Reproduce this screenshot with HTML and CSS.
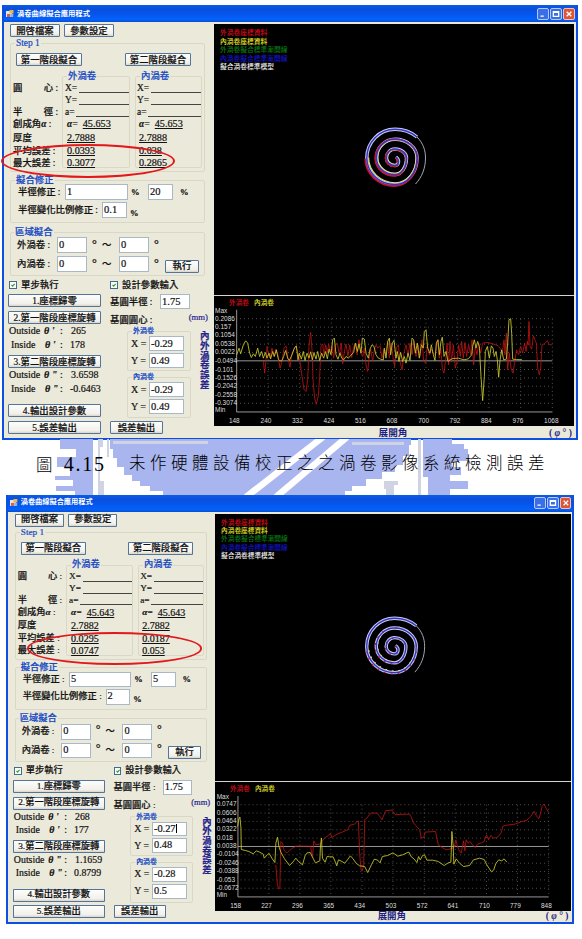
FILE: index.html
```html
<!DOCTYPE html>
<html lang="zh-Hant">
    <head>
        <meta charset="utf-8">
        <meta name="viewport" content="width=device-width, initial-scale=1.0">
        <title>渦卷曲線擬合應用程式</title>
        <link rel="stylesheet" href="styles.css">
    </head>
    <body>

        <!-- shared shapes -->
        <svg class="defs" width="0" height="0">
            <defs>
                <path id="spiral-core" d="M1 -1 C5 2 4 7 0 7.5 A8.5 7.5 0 0 1 -8.5 0 A8.5 9 0 0 1 0 -9 A11.5 9 0 0 1 11.5 0 A11.5 16.5 0 0 1 0 16.5 A18.5 16.5 0 0 1 -18.5 0 A18.5 18.8 0 0 1 0 -18.8 A22 18.8 0 0 1 22 0 A22 26.5 0 0 1 0 26.5 A28.2 26.5 0 0 1 -28.2 0" />
                <path id="spiral" d="M1 -1 C5 2 4 7 0 7.5 A8.5 7.5 0 0 1 -8.5 0 A8.5 9 0 0 1 0 -9 A11.5 9 0 0 1 11.5 0 A11.5 16.5 0 0 1 0 16.5 A18.5 16.5 0 0 1 -18.5 0 A18.5 18.8 0 0 1 0 -18.8 A22 18.8 0 0 1 22 0 A22 26.5 0 0 1 0 26.5 A28.2 26.5 0 0 1 -28.2 0 A28.2 28.7 0 0 1 0 -28.7 C9 -28.7 16 -26 22 -21" />
                <path id="spiral-tail" d="M22 -21 C28 -15 30.5 -8 30.5 0 C30.5 10 27 19 20.5 26" />
                <symbol id="app-icon" viewBox="0 0 8 8">
                    <rect x="0" y="1" width="6" height="6" fill="#dfe6f5" />
                    <rect x="3.5" y="0" width="4" height="3.5" fill="#f0b53c" />
                    <rect x="1" y="4" width="3" height="3" fill="#d9603a" />
                    <rect x="4.3" y="4" width="3" height="3" fill="#8fb0ef" />
                </symbol>
            </defs>
        </svg>

        <div class="window">
            <div class="titlebar">
                <svg class="icon"><use href="#app-icon" /></svg>
                <span class="title">渦卷曲線擬合應用程式</span>
                <div class="controls">
                    <svg class="ctl" viewBox="0 0 12 12"><path d="M3 8.6h4" /></svg>
                    <svg class="ctl" viewBox="0 0 12 12"><path d="M2.8 3.2h6.4v5.6H2.8zM2.8 4h6.4" /></svg>
                    <svg class="ctl close" viewBox="0 0 12 12"><path d="M3.2 3.2l5.6 5.6M8.8 3.2L3.2 8.8" /></svg>
                </div>
            </div>
            <div class="content">
                <div class="panel">
                    <div class="menu">
                        <button>開啓檔案</button>
                        <button>參數設定</button>
                    </div>

                    <fieldset class="step">
                        <legend>Step 1</legend>
                        <div class="stages">
                            <button>第一階段擬合</button>
                            <button>第二階段擬合</button>
                        </div>
                        <div class="results">
                            <div class="rows labels">
                                <span class="wide"><i>圓</i><i>心 :</i></span>
                                <span></span>
                                <span class="wide"><i>半</i><i>徑 :</i></span>
                                <span>創成角<em>α</em> :</span>
                                <span>厚度</span>
                                <span>平均誤差 :</span>
                                <span>最大誤差 :</span>
                            </div>
                            <fieldset>
                                <legend>外渦卷</legend>
                                <div class="rows">
                                    <span>X=<b class="blank"></b></span>
                                    <span>Y=<b class="blank"></b></span>
                                    <span>a=<b class="blank"></b></span>
                                    <span class="angle"><em>α</em>= <u>45.653</u></span>
                                    <span><u>2.7888</u></span>
                                    <span><u>0.0393</u></span>
                                    <span><u>0.3077</u></span>
                                </div>
                            </fieldset>
                            <fieldset>
                                <legend>內渦卷</legend>
                                <div class="rows">
                                    <span>X=<b class="blank"></b></span>
                                    <span>Y=<b class="blank"></b></span>
                                    <span>a=<b class="blank"></b></span>
                                    <span class="angle"><em>α</em>= <u>45.653</u></span>
                                    <span><u>2.7888</u></span>
                                    <span><u>0.038</u></span>
                                    <span><u>0.2865</u></span>
                                </div>
                            </fieldset>
                        </div>
                    </fieldset>

                    <fieldset class="fit">
                        <legend>擬合修正</legend>
                        <div class="line">
                            <span class="lbl-short">半徑修正 :</span>
                            <span class="field w63">1</span>
                            <span class="pct">%</span>
                            <span class="field w25">20</span>
                            <span class="pct">%</span>
                        </div>
                        <div class="line">
                            <span class="lbl-long">半徑變化比例修正 :</span>
                            <span class="field w25">0.1</span>
                            <span class="pct low">%</span>
                        </div>
                    </fieldset>

                    <fieldset class="region">
                        <legend>區域擬合</legend>
                        <div class="line">
                            <span class="lbl">外渦卷 :</span>
                            <span class="field w30">0</span>
                            <span class="deg">°</span><span class="tilde">～</span>
                            <span class="field w30">0</span>
                            <span class="deg">°</span>
                        </div>
                        <div class="line">
                            <span class="lbl">內渦卷 :</span>
                            <span class="field w30">0</span>
                            <span class="deg">°</span><span class="tilde">～</span>
                            <span class="field w30">0</span>
                            <span class="deg">°</span>
                            <button class="run">執行</button>
                        </div>
                    </fieldset>

                    <div class="lower">
                        <div class="steps">
                            <label><svg class="check" viewBox="0 0 8 8"><path d="M2 3.8l1.5 1.7L6.2 2.4" /></svg>單步執行</label>
                            <button class="b1">1.座標歸零</button>
                            <button class="b2">2.第一階段座標旋轉</button>
                            <p class="out"><span>Outside</span><em>θ '</em><span>:</span><span>265</span></p>
                            <p class="in"><span>Inside</span><em>θ '</em><span>:</span><span>178</span></p>
                            <button class="b3">3.第二階段座標旋轉</button>
                            <p class="out"><span>Outside</span><em>θ "</em><span>:</span><span>3.6598</span></p>
                            <p class="in"><span>Inside</span><em>θ "</em><span>:</span><span>-0.6463</span></p>
                            <button class="b4">4.輸出設計參數</button>
                            <button class="b5">5.誤差輸出</button>
                        </div>
                        <div class="design">
                            <label><svg class="check" viewBox="0 0 8 8"><path d="M2 3.8l1.5 1.7L6.2 2.4" /></svg>設計參數輸入</label>
                            <div class="radius"><span>基圓半徑 :</span><span class="field w30">1.75</span></div>
                            <div class="center"><span>基圓圓心 :</span><span class="mm">(mm)</span></div>
                            <div class="offsets">
                                <div class="pairs">
                                    <fieldset>
                                        <legend>外渦卷</legend>
                                        <div class="xy"><span>X =</span><span class="field w35">-0.29</span></div>
                                        <div class="xy"><span>Y =</span><span class="field w35">0.49</span></div>
                                    </fieldset>
                                    <fieldset>
                                        <legend>內渦卷</legend>
                                        <div class="xy"><span>X =</span><span class="field w35">-0.29</span></div>
                                        <div class="xy"><span>Y =</span><span class="field w35">0.49</span></div>
                                    </fieldset>
                                </div>
                                <span class="axis-y">內外渦卷誤差</span>
                            </div>
                            <button class="export">誤差輸出</button>
                        </div>
                    </div>
                </div>

                <div class="view">
                    <div class="plot">
                        <ul class="key">
                            <li class="red">外渦卷座標資料</li>
                            <li class="yellow">內渦卷座標資料</li>
                            <li class="green">外渦卷擬合標準漸開線</li>
                            <li class="blue">內渦卷擬合標準漸開線</li>
                            <li class="white">擬合渦卷標準模型</li>
                        </ul>
                        <svg class="scroll" viewBox="-35 -35 70 70">
                            <use href="#spiral" class="edge" />
                            <use href="#spiral-core" class="edge-red" transform="translate(-.5 .6) scale(1.035)" />
                            <use href="#spiral-core" class="edge-yellow" transform="translate(.4 -.4) scale(.95)" />
                            <use href="#spiral" class="core" />
                            <use href="#spiral-tail" class="tail" />
                        </svg>
                    </div>
                    <svg class="chart" viewBox="12 19 1080 389" preserveAspectRatio="none">
                        <g class="grid">
                            <path d="M90 87H1027M90 112H1027M90 137H1027M90 163H1027M90 188H1027M90 239H1027M90 264H1027M90 289H1027M90 315H1027M90 340H1027" />
                            <path d="M174 87V364M269 87V364M364 87V364M458 87V364M553 87V364M648 87V364M743 87V364M837 87V364M932 87V364M1027 87V364" />
                        </g>
                        <path class="axis" d="M80 60V366H1027M80 213H1027" />
                        <polyline class="s-red" points="160,213 164,250 168,210 171,170 175,190 180,205 186,175 192,200 198,178 204,196 210,235 216,215 222,175 228,168 234,205 240,232 246,190 252,178 258,170 264,190 270,215 276,260 282,298 288,305 293,270 297,170 302,128 306,180 309,270 314,325 319,343 325,318 329,260 333,170 338,162 342,195 347,165 352,188 356,162 361,190 366,168 371,205 376,165 382,160 388,195 394,160 398,222 404,180 408,163 414,200 419,165 425,203 431,170 437,160 441,195 447,150 452,188 458,200 463,175 468,225 473,245 478,200 482,178 488,215 493,180 498,165 504,175 510,168 516,205 522,178 528,195 533,155 538,205 544,160 550,210 554,230 559,175 565,165 570,215 576,240 582,190 588,165 594,195 600,160 606,195 612,155 618,200 624,165 630,200 636,150 641,215 647,220 652,165 658,195 664,178 670,190 676,195 683,150 688,205 692,175 697,235 702,250 708,200 711,160 716,225 720,155 725,215 730,165 736,235 741,215 746,165 751,200 755,155 760,205 765,158 770,200 776,165 782,195 786,150 791,225 796,170 801,195 806,160 812,190 818,160 835,158 850,163 865,168 872,178 877,190 882,150 885,195 889,130 893,240 898,190 903,235 909,250 915,210 920,180 926,195 932,170 938,190 944,160 948,185 952,155 954,165 957,95 960,170 965,178 970,138 974,148 979,160 983,235 988,255 992,235 996,165 1003,162 1012,153 1018,165 1027,165" />
                        <polyline class="s-yellow" points="80,195 87,175 92,192 100,165 107,153 113,160 119,190 124,203 130,192 136,200 143,175 149,200 155,185 160,205 166,188 171,205 177,190 182,207 188,185 193,200 199,180 205,208 211,214 216,212 221,200 227,182 233,205 238,212 246,195 253,175 259,168 264,210 268,190 274,208 280,185 285,212 291,190 297,205 302,186 307,210 312,188 318,208 323,185 329,212 335,190 341,205 347,185 352,207 357,178 363,195 368,150 373,145 378,195 384,208 390,190 395,205 401,210 408,200 415,205 423,196 431,188 436,160 442,185 447,162 453,190 457,145 463,148 468,190 475,205 480,178 486,165 492,170 498,195 505,205 512,208 520,210 523,175 528,205 533,155 538,145 542,195 547,160 552,152 558,205 562,185 567,215 572,188 578,215 583,200 588,220 594,190 600,212 606,145 611,150 616,190 622,160 628,205 634,165 640,175 643,125 648,120 653,175 660,190 664,165 670,195 675,212 679,160 684,150 688,195 693,155 697,142 702,200 708,185 714,215 720,210 728,206 745,205 762,210 775,207 785,195 788,170 793,150 798,175 803,155 808,170 813,260 818,332 823,260 826,185 832,170 838,205 844,168 849,175 853,200 858,185 862,210 866,262 870,212 875,180 881,210 889,208 893,160 897,90 902,87 905,130 908,208 920,209 936,210" />
                        <g class="ticks">
                            <text x="15" y="71">Max</text>
                            <text x="15" y="93">0.2086</text>
                            <text x="15" y="118">0.157</text>
                            <text x="15" y="143">0.1054</text>
                            <text x="15" y="169">0.0538</text>
                            <text x="15" y="194">0.0022</text>
                            <text x="15" y="219">-0.0494</text>
                            <text x="15" y="245">-0.101</text>
                            <text x="15" y="270">-0.1526</text>
                            <text x="15" y="295">-0.2042</text>
                            <text x="15" y="321">-0.2558</text>
                            <text x="15" y="346">-0.3074</text>
                            <text x="15" y="367">Min</text>
                        </g>
                        <g class="ticks x">
                            <text x="73" y="400">148</text>
                            <text x="168" y="400">240</text>
                            <text x="262" y="400">332</text>
                            <text x="357" y="400">424</text>
                            <text x="451" y="400">516</text>
                            <text x="546" y="400">608</text>
                            <text x="641" y="400">700</text>
                            <text x="735" y="400">792</text>
                            <text x="829" y="400">884</text>
                            <text x="924" y="400">976</text>
                            <text x="1024" y="400">1068</text>
                        </g>
                        <text class="name red" x="57" y="46">外渦卷</text>
                        <text class="name yellow" x="132" y="46">內渦卷</text>
                    </svg>
                    <div class="axis-x"><span></span><span>展開角</span><span>( <em>φ</em> ° )</span></div>
                </div>
            </div>
            <div class="mark mark-a"></div>
        </div>

        <div class="caption">
            <svg class="emblem" viewBox="0 0 582 56">
                <g fill="#a9b5ee">
                    <path d="M60 0H93V56H75V52H56V47H73V41H55V37H70V28H57V18H76V10H60z" />
                    <path d="M110 0H411V6H409V17H403V26H395V33H382V40H366V47H352V52H345V56H163V52H150V47H140V42H132V36H124V28H117V19H113V10H110z" />
                    <path d="M423 0H452V5H464V10H468V22H452V28H461V36H450V42H468V50H450V56H428V38H423z" />
                </g>
                <g fill="#cfd3e3">
                    <path d="M98 0h5v8h-3v34h4v14h-6z" />
                    <path d="M107 0h2v18h-2zM418 0h3v56h-3zM384 42h14v4h-4v10h-8v-6h-2z" />
                    <path d="M113 2h95v3h-95zM352 3h52v3h-52z" />
                </g>
                <g class="stripes">
                    <path d="M323 -2L246 58" />
                    <path d="M347 -2L276 58" />
                </g>
            </svg>
            <p><span class="no">圖 <b>4.15</b></span><span class="what">未作硬體設備校正之之渦卷影像系統檢測誤差</span></p>
        </div>

        <div class="window second">
            <div class="titlebar">
                <svg class="icon"><use href="#app-icon" /></svg>
                <span class="title">渦卷曲線擬合應用程式</span>
                <div class="controls">
                    <svg class="ctl" viewBox="0 0 12 12"><path d="M3 8.6h4" /></svg>
                    <svg class="ctl" viewBox="0 0 12 12"><path d="M2.8 3.2h6.4v5.6H2.8zM2.8 4h6.4" /></svg>
                    <svg class="ctl close" viewBox="0 0 12 12"><path d="M3.2 3.2l5.6 5.6M8.8 3.2L3.2 8.8" /></svg>
                </div>
            </div>
            <div class="content">
                <div class="panel">
                    <div class="menu">
                        <button>開啓檔案</button>
                        <button>參數設定</button>
                    </div>

                    <fieldset class="step">
                        <legend>Step 1</legend>
                        <div class="stages">
                            <button>第一階段擬合</button>
                            <button>第二階段擬合</button>
                        </div>
                        <div class="results">
                            <div class="rows labels">
                                <span class="wide"><i>圓</i><i>心 :</i></span>
                                <span></span>
                                <span class="wide"><i>半</i><i>徑 :</i></span>
                                <span>創成角<em>α</em> :</span>
                                <span>厚度</span>
                                <span>平均誤差 :</span>
                                <span>最大誤差 :</span>
                            </div>
                            <fieldset>
                                <legend>外渦卷</legend>
                                <div class="rows">
                                    <span>X=<b class="blank"></b></span>
                                    <span>Y=<b class="blank"></b></span>
                                    <span>a=<b class="blank"></b></span>
                                    <span class="angle"><em>α</em>= <u>45.643</u></span>
                                    <span><u>2.7882</u></span>
                                    <span><u>0.0295</u></span>
                                    <span><u>0.0747</u></span>
                                </div>
                            </fieldset>
                            <fieldset>
                                <legend>內渦卷</legend>
                                <div class="rows">
                                    <span>X=<b class="blank"></b></span>
                                    <span>Y=<b class="blank"></b></span>
                                    <span>a=<b class="blank"></b></span>
                                    <span class="angle"><em>α</em>= <u>45.643</u></span>
                                    <span><u>2.7882</u></span>
                                    <span><u>0.0187</u></span>
                                    <span><u>0.053</u></span>
                                </div>
                            </fieldset>
                        </div>
                    </fieldset>

                    <fieldset class="fit">
                        <legend>擬合修正</legend>
                        <div class="line">
                            <span class="lbl-short">半徑修正 :</span>
                            <span class="field w63">5</span>
                            <span class="pct">%</span>
                            <span class="field w25">5</span>
                            <span class="pct">%</span>
                        </div>
                        <div class="line">
                            <span class="lbl-long">半徑變化比例修正 :</span>
                            <span class="field w25">2</span>
                            <span class="pct low">%</span>
                        </div>
                    </fieldset>

                    <fieldset class="region">
                        <legend>區域擬合</legend>
                        <div class="line">
                            <span class="lbl">外渦卷 :</span>
                            <span class="field w30">0</span>
                            <span class="deg">°</span><span class="tilde">～</span>
                            <span class="field w30">0</span>
                            <span class="deg">°</span>
                        </div>
                        <div class="line">
                            <span class="lbl">內渦卷 :</span>
                            <span class="field w30">0</span>
                            <span class="deg">°</span><span class="tilde">～</span>
                            <span class="field w30">0</span>
                            <span class="deg">°</span>
                            <button class="run">執行</button>
                        </div>
                    </fieldset>

                    <div class="lower">
                        <div class="steps">
                            <label><svg class="check" viewBox="0 0 8 8"><path d="M2 3.8l1.5 1.7L6.2 2.4" /></svg>單步執行</label>
                            <button class="b1">1.座標歸零</button>
                            <button class="b2">2.第一階段座標旋轉</button>
                            <p class="out"><span>Outside</span><em>θ '</em><span>:</span><span>268</span></p>
                            <p class="in"><span>Inside</span><em>θ '</em><span>:</span><span>177</span></p>
                            <button class="b3">3.第二階段座標旋轉</button>
                            <p class="out"><span>Outside</span><em>θ "</em><span>:</span><span>1.1659</span></p>
                            <p class="in"><span>Inside</span><em>θ "</em><span>:</span><span>0.8799</span></p>
                            <button class="b4">4.輸出設計參數</button>
                            <button class="b5">5.誤差輸出</button>
                        </div>
                        <div class="design">
                            <label><svg class="check" viewBox="0 0 8 8"><path d="M2 3.8l1.5 1.7L6.2 2.4" /></svg>設計參數輸入</label>
                            <div class="radius"><span>基圓半徑 :</span><span class="field w30">1.75</span></div>
                            <div class="center"><span>基圓圓心 :</span><span class="mm">(mm)</span></div>
                            <div class="offsets">
                                <div class="pairs">
                                    <fieldset>
                                        <legend>外渦卷</legend>
                                        <div class="xy"><span>X =</span><span class="field w35 caret">-0.27</span></div>
                                        <div class="xy"><span>Y =</span><span class="field w35">0.48</span></div>
                                    </fieldset>
                                    <fieldset>
                                        <legend>內渦卷</legend>
                                        <div class="xy"><span>X =</span><span class="field w35">-0.28</span></div>
                                        <div class="xy"><span>Y =</span><span class="field w35">0.5</span></div>
                                    </fieldset>
                                </div>
                                <span class="axis-y">內外渦卷誤差</span>
                            </div>
                            <button class="export">誤差輸出</button>
                        </div>
                    </div>
                </div>

                <div class="view">
                    <div class="plot">
                        <ul class="key">
                            <li class="red">外渦卷座標資料</li>
                            <li class="yellow">內渦卷座標資料</li>
                            <li class="green">外渦卷擬合標準漸開線</li>
                            <li class="blue">內渦卷擬合標準漸開線</li>
                            <li class="white">擬合渦卷標準模型</li>
                        </ul>
                        <svg class="scroll" viewBox="-35 -35 70 70">
                            <use href="#spiral" class="edge" />
                            <use href="#spiral-core" class="edge-red dashed" transform="translate(-.5 .6) scale(1.03)" />
                            <use href="#spiral-core" class="edge-yellow dashed" transform="translate(.4 -.4) scale(.95)" />
                            <use href="#spiral" class="core" />
                            <use href="#spiral-tail" class="tail" />
                        </svg>
                    </div>
                    <svg class="chart" viewBox="13 22 1068 384" preserveAspectRatio="none">
                        <g class="grid">
                            <path d="M90 90H1016M90 115H1016M90 140H1016M90 165H1016M90 190H1016M90 240H1016M90 265H1016M90 290H1016M90 315H1016M90 340H1016" />
                            <path d="M175 90V364M268 90V364M361 90V364M455 90V364M548 90V364M642 90V364M735 90V364M829 90V364M922 90V364M1016 90V364" />
                        </g>
                        <path class="axis" d="M82 64V366H1016M82 215H1016" />
                        <polyline class="s-red" points="196,270 200,325 204,342 208,340 211,200 216,205 221,228 230,234 243,222 256,214 300,214 306,248 310,198 316,210 328,208 335,200 342,190 354,182 360,176 364,188 380,178 395,172 412,165 418,152 432,148 444,138 448,240 452,285 456,288 460,270 463,135 470,130 480,115 500,115 508,125 515,135 526,108 545,106 555,120 572,119 598,118 602,125 610,145 622,158 628,165 633,190 640,188 645,172 676,170 684,210 696,218 708,225 722,222 732,218 737,195 741,212 746,225 753,235 760,198 764,228 768,195 774,205 780,200 785,208 795,218 802,208 812,205 822,200 829,180 835,195 843,182 850,190 860,188 868,182 874,172 878,155 885,152 915,148 935,140 950,137 962,125 972,110 980,125 986,132 992,115 996,95 1002,88 1008,100 1016,113" />
                        <polyline class="s-yellow" points="81,155 85,132 88,127 91,160 92,224 104,227 115,230 128,237 137,228 147,232 158,238 161,250 170,240 176,236 184,250 193,263 196,205 201,187 205,215 211,232 222,252 237,272 250,258 256,250 264,260 276,270 284,242 290,234 299,233 305,245 315,264 328,258 330,215 333,190 336,250 344,262 350,245 358,246 368,246 375,262 379,273 384,255 395,260 403,265 411,255 420,243 428,252 438,266 448,273 463,275 472,293 484,268 492,253 502,256 509,264 516,245 532,242 548,234 562,244 577,240 590,234 596,232 603,246 611,252 620,263 625,245 630,255 637,242 643,240 650,256 668,256 684,260 702,272 714,264 722,262 725,170 729,215 731,268 738,252 748,265 760,275 778,272 790,255 808,250 822,254 830,270 838,282 844,291 851,285 857,266 866,255 875,258 882,252 890,262" />
                        <g class="ticks">
                            <text x="18" y="74">Max</text>
                            <text x="18" y="95">0.0747</text>
                            <text x="18" y="120">0.0606</text>
                            <text x="18" y="145">0.0464</text>
                            <text x="18" y="170">0.0322</text>
                            <text x="18" y="195">0.018</text>
                            <text x="18" y="220">0.0038</text>
                            <text x="18" y="245">-0.0104</text>
                            <text x="18" y="270">-0.0246</text>
                            <text x="18" y="295">-0.0388</text>
                            <text x="18" y="320">-0.053</text>
                            <text x="18" y="345">-0.0672</text>
                            <text x="18" y="366">Min</text>
                        </g>
                        <g class="ticks x">
                            <text x="75" y="399">158</text>
                            <text x="168" y="399">227</text>
                            <text x="261" y="399">296</text>
                            <text x="355" y="399">365</text>
                            <text x="448" y="399">434</text>
                            <text x="542" y="399">503</text>
                            <text x="636" y="399">572</text>
                            <text x="728" y="399">641</text>
                            <text x="823" y="399">710</text>
                            <text x="916" y="399">779</text>
                            <text x="1009" y="399">848</text>
                        </g>
                        <text class="name red" x="58" y="49">外渦卷</text>
                        <text class="name yellow" x="133" y="49">內渦卷</text>
                    </svg>
                    <div class="axis-x"><span></span><span>展開角</span><span>( <em>φ</em> ° )</span></div>
                </div>
            </div>
            <div class="mark mark-b"></div>
        </div>

    </body>
</html>
```
FILE: styles.css
```css
body {
    width: 582px;
    height: 939px;
    margin: 0;
    padding-top: 5px;
    box-sizing: border-box;
    overflow: hidden;
    background: white;
    color: #111;
    font-family: "Liberation Serif", "Noto Sans CJK TC", serif;
    font-size: 9.4px;
    font-weight: 500;
    line-height: 10px;
}

.defs {
    position: absolute;
}

/* window frame */
.window {
    position: relative;
    display: flex;
    flex-direction: column;
    width: 576px;
    height: 435px;
    margin-left: 2px;
    box-sizing: border-box;
    border: 2px solid #0d4fe0;
    border-top: 0;
    background: #ebe9da;
}

.window.second {
    margin-left: 6px;
    border-width: 0 2.1px 2.1px;
    zoom: 0.987;
}

.titlebar {
    display: flex;
    align-items: center;
    height: 17px;
    padding: 0 1px 0 2px;
    background: linear-gradient(#0a5ce8 0%, #0a4fdc 25%, #0458f0 60%, #0362fb 85%, #0a4cd0 100%);
    color: white;
}

.titlebar .icon {
    width: 8px;
    height: 8px;
    margin-right: 3px;
}

.titlebar .title {
    flex: 1;
    font-size: 7.3px;
    font-weight: 700;
    white-space: nowrap;
}

.controls {
    display: flex;
    gap: 1px;
}

.ctl {
    width: 12px;
    height: 12px;
    box-sizing: border-box;
    border: 1px solid #b7c9f5;
    border-radius: 2px;
    background: #3a6fe8;
    fill: none;
    stroke: white;
    stroke-width: 1.6;
}

.ctl.close {
    background: #dc5536;
    border-color: #eec0b8;
}

.content {
    display: flex;
    flex: 1;
}

/* left side controls */
.panel {
    display: flex;
    flex-direction: column;
    flex: none;
    width: 210px;
    padding: 2px 0 0 4px;
    box-sizing: border-box;
    white-space: nowrap;
    -webkit-text-stroke: 0.2px;
}

.second .panel {
    padding-left: 5px;
}

button {
    height: 13px;
    padding: 0;
    box-sizing: border-box;
    border: 1px solid #54749a;
    border-radius: 1px;
    background: linear-gradient(#fdfdfb, #f1f0ea 80%, #d8d4c8);
    color: #111;
    font: inherit;
    line-height: 10px;
    white-space: nowrap;
}

fieldset {
    min-width: 0;
    margin: 0;
    padding: 0;
    box-sizing: border-box;
    border: 1px solid #d9d7c6;
    border-radius: 2px;
}

legend {
    height: 10px;
    margin-left: 4px;
    padding: 0 1px;
    color: #1447c4;
}

em {
    font-family: "Liberation Serif", serif;
    font-weight: 700;
}

.menu {
    display: flex;
    gap: 4px;
    height: 13px;
    padding-left: 2px;
}

.menu button {
    width: 50px;
}

.step {
    width: 195px;
    height: 134px;
    margin: 1px 0 0 2px;
}

.stages {
    display: flex;
    justify-content: space-between;
    margin: 5px 13px 0 5px;
}

.stages button {
    width: 66px;
}

.results {
    display: grid;
    grid-template-columns: 49px 68px 67px;
    column-gap: 0;
    margin: 5px 0 0 2px;
}

.results fieldset {
    height: 97px;
}

.results fieldset + fieldset {
    margin-left: 5px;
    margin-right: -5px;
}

.results fieldset + fieldset .rows {
    padding-left: 1px;
}

.rows {
    display: grid;
    grid-template-rows: 12px 12px 12px 12.5px 15px 11.5px 11.5px;
    align-items: center;
    padding: 1px 0 0 2px;
    height: 87px;
    box-sizing: border-box;
}

.rows.labels {
    padding: 1px 0 0;
    margin-top: 10px;
}

.rows span {
    display: flex;
    align-items: center;
    white-space: pre;
}

.labels .wide {
    justify-content: space-between;
    width: 45px;
}

.rows i {
    font-style: normal;
}

.rows .blank {
    flex: 1;
    height: 9px;
    margin: 0 0 0 2px;
    border-bottom: 1px solid #444;
}

.rows u {
    margin-left: 2px;
    font-size: 10.2px;
    text-underline-offset: 1px;
}

.rows .angle {
    padding-left: 2px;
    letter-spacing: 0.3px;
}

.rows .angle u {
    letter-spacing: 0;
}

.field {
    display: block;
    flex: none;
    height: 16px;
    padding: 1px 0 0 1px;
    box-sizing: border-box;
    border: 1px solid #a9b8c6;
    background: white;
    font-size: 10.5px;
    line-height: 11px;
}

.w25 { width: 25px; }
.w30 { width: 30px; }
.w35 { width: 35px; }
.w63 { width: 63px; }

.caret::after {
    content: "";
    display: inline-block;
    height: 9px;
    border-right: 1px solid black;
    vertical-align: -1px;
}

.line {
    display: flex;
    align-items: center;
    height: 16px;
}

.fit {
    width: 195px;
    height: 48px;
    margin: 3px 0 0 2px;
}

.fit .line {
    padding-left: 7px;
    margin-top: -1px;
}

.fit .line + .line {
    margin-top: 2px;
}

.lbl-short {
    width: 47px;
}

.lbl-long {
    width: 84px;
}

.pct {
    width: 20px;
    padding-left: 3px;
    box-sizing: border-box;
    font-size: 8.5px;
    font-weight: 700;
}

.line .pct:last-child {
    padding-left: 7px;
}

.line .pct.low {
    padding: 5px 0 0 3px;
}

.region {
    width: 195px;
    height: 49px;
    margin: 4px 0 0 2px;
}

.region legend {
    margin-left: 3px;
}

.region .line {
    padding-left: 6px;
}

.region .line + .line {
    margin-top: 3px;
}

.region .lbl {
    width: 40px;
}

.deg {
    width: 13px;
    padding: 0 0 3px 5px;
    box-sizing: border-box;
    font-size: 12px;
}

.tilde {
    width: 19px;
    padding-left: 2px;
    box-sizing: border-box;
}

.run {
    width: 34px;
    margin: 4px 0 0 3px;
}

.lower {
    display: flex;
    gap: 9px;
    margin-top: 3px;
}

.steps,
.design {
    display: flex;
    flex-direction: column;
}

.steps {
    width: 93px;
}

.design {
    width: 100px;
}

label {
    display: flex;
    align-items: center;
    height: 12px;
    padding-left: 1px;
}

.design label {
    padding-left: 0;
}

.check {
    width: 8px;
    height: 8px;
    margin-right: 4px;
    box-sizing: border-box;
    border: 1px solid #3f6d92;
    background: #fbfbf8;
    fill: none;
    stroke: #2aa12a;
    stroke-width: 1.5;
}

.steps .b1 { margin-top: 3px; }
.steps .b2 { margin-top: 4px; }
.steps .b3 { margin-top: 4px; }
.steps .b4 { margin-top: 9px; }
.steps .b5 { margin-top: 4px; }

.steps p {
    display: grid;
    grid-template-columns: 35px 16px 11px auto;
    align-items: center;
    height: 14px;
    margin: 0;
    padding-left: 1px;
    font-size: 10px;
}

.steps p.in {
    height: 13px;
    padding-left: 3px;
    grid-template-columns: 34px 15px 10px auto;
}

.radius {
    display: flex;
    justify-content: space-between;
    align-items: center;
    width: 80px;
    height: 15px;
    margin-top: 3px;
}

.radius .field,
.xy .field {
    height: 15px;
}

.center {
    display: flex;
    justify-content: space-between;
    width: 98px;
    height: 12px;
    margin-top: 5px;
    line-height: 12px;
}

.mm {
    margin-top: -3px;
    color: #24248c;
    font-size: 8.7px;
}

.offsets {
    display: flex;
    height: 92px;
}

.pairs {
    width: 64px;
    margin-left: 17px;
}

.pairs fieldset {
    height: 45px;
}

.pairs fieldset + fieldset {
    height: 46px;
    margin-top: 1px;
}

.pairs legend {
    font-size: 7px;
}

.xy {
    display: flex;
    justify-content: space-between;
    align-items: center;
    height: 15px;
    padding: 0 6px 0 3px;
    font-size: 10px;
}

.xy + .xy {
    margin-top: 2px;
}

.axis-y {
    width: 10px;
    margin: 6px 0 0 9px;
    color: #24248c;
    font-weight: 700;
    font-size: 9.5px;
    line-height: 9.8px;
    white-space: normal;
    word-break: break-all;
}

.export {
    width: 53px;
    margin-top: 3px;
}

/* drawing area and error chart */
.view {
    display: flex;
    flex-direction: column;
    width: 360px;
    padding-top: 2px;
}

.plot {
    position: relative;
    height: 271px;
    background: black;
}

.key {
    margin: 0;
    padding: 5px 0 0 6px;
    list-style: none;
    font-size: 6.75px;
    line-height: 8.5px;
}

.red { color: #d80c18; fill: #d80c18; }
.yellow { color: #e6e62a; fill: #e6e62a; }
.green { color: #0a7a14; fill: #0a7a14; }
.blue { color: #1414c8; fill: #1414c8; }
.white { color: #f2f2f2; }

.scroll {
    position: absolute;
    left: 146px;
    top: 99px;
    width: 70px;
    height: 70px;
    fill: none;
}

.second .scroll {
    left: 147px;
    top: 100px;
}

.edge { stroke: #c9cdf3; stroke-width: 3.4; }
.edge-red { stroke: #c2143c; stroke-width: 1.9; }
.edge-yellow { stroke: #e2df7c; stroke-width: 1.2; }
.dashed { stroke-dasharray: 2 5; stroke-width: 1.2; }
.core { stroke: #3434bd; stroke-width: 1.4; }
.tail { stroke: #b8b8c4; stroke-width: 0.9; }

.chart {
    display: block;
    width: 360px;
    height: 130px;
    border-top: 1px solid #d4d4d4;
    background: black;
    fill: none;
}

.grid {
    stroke: #777;
    stroke-width: 2;
    stroke-dasharray: 3 9;
}

.axis {
    stroke: #b4b4b4;
    stroke-width: 2.5;
}

.s-red {
    stroke: #c01414;
    stroke-width: 2.4;
}

.s-yellow {
    stroke: #c6c62c;
    stroke-width: 2.6;
}

.ticks {
    fill: #dedede;
    font-family: "Liberation Sans", sans-serif;
    font-size: 19.5px;
}

.ticks.x {
    text-anchor: middle;
}

.name {
    font-size: 20px;
}

.axis-x {
    display: grid;
    grid-template-columns: 1fr auto 1fr;
    align-items: center;
    height: 12px;
    padding: 1px 2px 0 0;
    box-sizing: border-box;
    color: #1e1e84;
    font-weight: 700;
    font-size: 9.6px;
}

.axis-x span:last-child {
    text-align: right;
    white-space: pre;
}

/* hand drawn highlight */
.mark {
    position: absolute;
    box-sizing: border-box;
    border: 2px solid #e3181c;
    border-radius: 50%;
}

.mark-a {
    left: -3px;
    top: 139px;
    width: 174px;
    height: 34px;
}

.mark-b {
    left: 19px;
    top: 139px;
    width: 178px;
    height: 33px;
    border-width: 2.1px;
}

/* figure caption between the two windows */
.caption {
    position: relative;
    height: 55px;
}

.emblem {
    position: absolute;
    top: 0;
    left: 0;
    width: 582px;
    height: 56px;
    margin-top: -1px;
}

.stripes {
    stroke: white;
    stroke-width: 6.5;
}

.caption p {
    position: relative;
    display: flex;
    margin: 0;
    padding: 13px 0 0 36px;
    color: black;
    font-size: 16.5px;
    font-weight: 300;
    line-height: 22px;
    white-space: nowrap;
}

.caption .no {
    width: 93px;
}

.caption b {
    margin-left: 7px;
    font-size: 20px;
    font-weight: 400;
    letter-spacing: 1.8px;
}

.caption .what {
    letter-spacing: 4.5px;
}
```
